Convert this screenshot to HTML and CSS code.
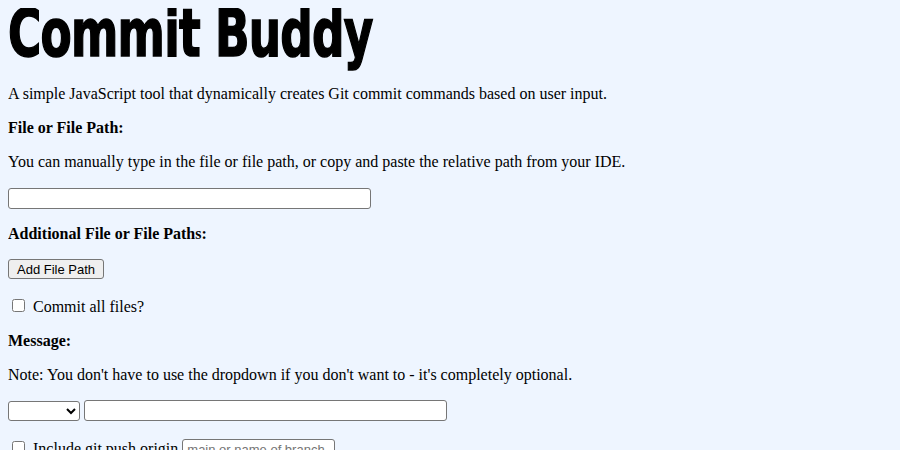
FILE: index.html
```html
<!DOCTYPE html>
<html lang="en">
<head>
<meta charset="utf-8">
<title>Commit Buddy</title>
<link rel="stylesheet" href="styles.css">
</head>
<body>
<h1 class="title">Commit Buddy</h1>
<p>A simple JavaScript tool that dynamically creates Git commit commands based on user input.</p>
<p class="label">File or File Path:</p>
<p>You can manually type in the file or file path, or copy and paste the relative path from your IDE.</p>
<div class="row row-first"><input class="text-wide" type="text"></div>
<p class="label">Additional File or File Paths:</p>
<div class="row"><button class="btn" type="button">Add File Path</button></div>
<p class="check-row"><input type="checkbox" id="all"><label for="all">Commit all files?</label></p>
<p class="label">Message:</p>
<p>Note: You don't have to use the dropdown if you don't want to - it's completely optional.</p>
<div class="row"><select class="type-select"><option></option></select> <input class="text-wide" type="text"></div>
<p class="check-row"><input type="checkbox" id="push"><label for="push">Include git push origin</label> <input class="branch" type="text" placeholder="main or name of branch"></p>
</body>
</html>
```
FILE: styles.css
```css
html { background: #eef5ff; }
body {
  margin: 8px;
  font-family: "Liberation Serif", "Times New Roman", serif;
  font-size: 16px;
  color: #000;
  background: #eef5ff;
}
.title {
  font-family: "DejaVu Sans Condensed", "DejaVu Sans", sans-serif;
  font-weight: 900;
  font-size: 66px;
  line-height: 1;
  margin: -7px 0 18px 0;
  letter-spacing: -1px;
  -webkit-text-stroke: 1.5px #000;
  transform: scaleX(0.765);
  transform-origin: left top;
  white-space: nowrap;
}
p { margin: 16px 0; }
.label { font-weight: bold; }
.row { margin: 0; }
.row-first { padding-top: 1px; }
.check-row { margin-top: 17px; }
.text-wide {
  width: 363px;
  height: 21px;
  box-sizing: border-box;
  border: 1px solid #767676;
  border-radius: 3px;
  background: #fff;
  padding: 1px 2px;
  font-family: "Liberation Sans", Arial, sans-serif;
  font-size: 13px;
  margin: 0;
  vertical-align: middle;
}
.btn {
  font-family: "Liberation Sans", Arial, sans-serif;
  font-size: 13px;
  padding: 1px 8px;
  height: 20px;
  border: 1px solid #767676;
  border-radius: 3px;
  background: #efefef;
  color: #000;
  margin: 0;
}
.type-select {
  width: 72px;
  height: 20px;
  border: 1px solid #767676;
  border-radius: 3px;
  background: #fff;
  margin: 0;
  vertical-align: middle;
}
.check-row input[type="checkbox"] { margin: 3px 8px 3px 4px; }
.branch {
  width: 153px;
  height: 21px;
  box-sizing: border-box;
  border: 1px solid #767676;
  border-radius: 3px;
  padding: 1px 4px;
  font-family: "Liberation Sans", Arial, sans-serif;
  font-size: 13px;
}
```
